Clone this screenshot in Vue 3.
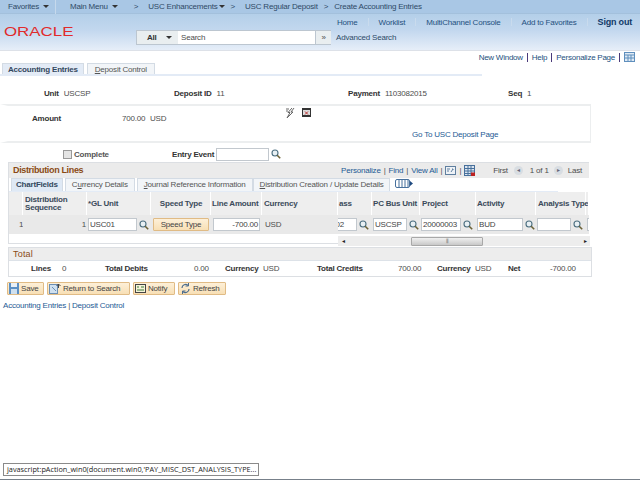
<template>
  <div class="page">
    <svg class="defs" width="0" height="0">
      <symbol id="glass" viewBox="0 0 10 10">
        <circle cx="4" cy="4" r="3" fill="#e8f0f4" stroke="#4c6f80" stroke-width="1.1" />
        <path d="M6.2 6.2 9.2 9.2" stroke="#6b6136" stroke-width="1.6" />
      </symbol>
    </svg>

    <header class="head">
      <nav class="crumbs">
        <span class="crumb fav">Favorites<i class="caret"></i></span>
        <span class="crumb menu">Main Menu<i class="caret"></i></span>
        <span class="sep first">&gt;</span>
        <span class="crumb enh">USC Enhancements<i class="caret tight"></i></span>
        <span class="sep">&gt;</span>
        <span class="crumb">USC Regular Deposit</span>
        <span class="sep last">&gt;</span>
        <span class="crumb">Create Accounting Entries</span>
      </nav>
      <div class="toplinks">
        <a>Home</a><b></b><a>Worklist</a><b></b><a>MultiChannel Console</a><b></b><a>Add to Favorites</a><b></b><a class="signout">Sign out</a>
      </div>
      <div class="brandrow">
        <span class="logo">ORACLE</span>
        <div class="search">
          <span class="all">All<i class="caret"></i></span>
          <span class="box">Search</span>
          <span class="go">»</span>
        </div>
        <span class="adv">Advanced Search</span>
      </div>
    </header>

    <div class="pagelinks">
      <a>New Window</a><em></em><a>Help</a><em></em><a>Personalize Page</a><em></em>
      <svg width="11" height="10" viewBox="0 0 11 10"><rect x="0.5" y="0.5" width="10" height="9" fill="#dfeaf4" stroke="#5f8fbd" /><path d="M1 3h9M4 3v6M7 3v6M1 6h9" stroke="#5f8fbd" /></svg>
    </div>

    <div class="pagetabs">
      <span class="ptab on">Accounting Entries</span>
      <span class="ptab"><u>D</u>eposit Control</span>
    </div>

    <div class="keys">
      <span class="k unit"><b>Unit</b>USCSP</span>
      <span class="k dep"><b>Deposit ID</b>11</span>
      <span class="k pay"><b>Payment</b>1103082015</span>
      <span class="k seq"><b>Seq</b>1</span>
    </div>

    <section class="amount">
      <b class="amt-label">Amount</b>
      <span class="amt-val">700.00</span>
      <span class="amt-cur">USD</span>
      <svg class="bolt" width="9" height="10" viewBox="0 0 9 10"><path d="M6 0 2 4.500h2L1 10l6-6H5l3-4M3 1H0M2 3H0" fill="none" stroke="#666" /></svg>
      <svg class="cal" width="9" height="9" viewBox="0 0 9 9"><rect width="9" height="9" fill="#333" /><rect x="1" y="2" width="7" height="5" fill="#ddd" /><path d="M3 3.500 6 6.500M6 3.500 3 6.500" stroke="#b33" /></svg>
      <a class="goto">Go To USC Deposit Page</a>
    </section>

    <div class="entry">
      <label class="complete"><i class="check"></i>Complete</label>
      <b class="ev">Entry Event</b>
      <span class="input ev-in"></span>
      <svg class="mag"><use href="#glass" /></svg>
    </div>

    <section class="dist">
      <div class="dist-title">
        <h3>Distribution Lines</h3>
        <div class="dist-links">
          <a>Personalize</a><s>|</s><a>Find</a><s>|</s><a>View All</a><s>|</s>
          <svg width="11" height="9" viewBox="0 0 11 9"><rect x="0.5" y="0.5" width="10" height="8" fill="#eef2f6" stroke="#5f7f9f" /><path d="M2 3h3M2 5h2M6 6l2-3M7 3h1v1" stroke="#5f7f9f" fill="none" /></svg>
          <s>|</s>
          <svg width="11" height="11" viewBox="0 0 11 11"><rect x="0.5" y="0.5" width="10" height="10" fill="#dbe4ef" stroke="#47709c" /><path d="M1 3.500h9M1 6h9M1 8.500h9M4 1v9M7 1v9" stroke="#47709c" /><rect x="7" y="7.500" width="4" height="3.500" fill="#b22" /></svg>
          <span class="pager">First</span>
          <i class="round prev">◂</i>
          <span>1 of 1</span>
          <i class="round next">▸</i>
          <span>Last</span>
        </div>
      </div>
      <div class="subtabs">
        <span class="stab on">ChartFields</span>
        <span class="stab">C<u>u</u>rrency Details</span>
        <span class="stab"><u>J</u>ournal Reference Information</span>
        <span class="stab creation"><u>D</u>istribution Creation / Update Details</span>
        <svg class="showall" width="18" height="10" viewBox="0 0 18 10"><rect x="0.5" y="0.5" width="14" height="8" rx="1.500" fill="#fff" stroke="#47709c" /><path d="M4 1v7M7 1v7M10 1v7M13 1v7" stroke="#47709c" /><path d="M15 2 18 4.500 15 7z" fill="#1f4a80" /></svg>
      </div>
      <div class="grid ghead">
        <span class="c"></span>
        <span class="c pad">Distribution<br />Sequence</span>
        <span class="c">*GL Unit</span>
        <span class="c ctr">Speed Type</span>
        <span class="c">Line Amount</span>
        <span class="c pad">Currency</span>
        <span class="c">ass</span>
        <span class="c">PC Bus Unit</span>
        <span class="c pad">Project</span>
        <span class="c">Activity</span>
        <span class="c pad">Analysis Type</span>
        <span class="c"></span>
      </div>
      <div class="grid grow">
        <span class="d idx">1</span>
        <span class="d seqno">1</span>
        <span class="d fld"><span class="input w45">USC01</span><svg class="mag"><use href="#glass" /></svg></span>
        <span class="d ctr"><span class="btn speed">Speed Type</span></span>
        <span class="d"><span class="input amt">-700.00</span></span>
        <span class="d cur">USD</span>
        <span class="d fld tail"><span class="input w28">0002</span><svg class="mag"><use href="#glass" /></svg></span>
        <span class="d fld"><span class="input w30">USCSP</span><svg class="mag"><use href="#glass" /></svg></span>
        <span class="d fld"><span class="input w36">20000003</span><svg class="mag"><use href="#glass" /></svg></span>
        <span class="d fld"><span class="input w42">BUD</span><svg class="mag"><use href="#glass" /></svg></span>
        <span class="d fld"><span class="input w30"></span><svg class="mag"><use href="#glass" /></svg></span>
        <span class="d fld"><span class="input w30"></span></span>
      </div>
      <div class="scroll">
        <span class="arrow">◂</span>
        <span class="thumb">⦀</span>
        <span class="arrow r">▸</span>
      </div>
    </section>

    <section class="total">
      <h3>Total</h3>
      <div class="total-row">
        <b class="t1">Lines</b><span>0</span>
        <b>Total Debits</b><span>0.00</span>
        <b>Currency</b><span>USD</span>
        <b>Total Credits</b><span>700.00</span>
        <b>Currency</b><span>USD</span>
        <b>Net</b><span>-700.00</span>
      </div>
    </section>

    <div class="actions">
      <span class="btn act save">
        <svg width="10" height="11" viewBox="0 0 10 11"><rect width="10" height="11" fill="#5b8fc4" /><rect x="2" y="0" width="6" height="4" fill="#e8eff6" /><rect x="2" y="6" width="6" height="5" fill="#cfe0ef" /></svg>Save
      </span>
      <span class="btn act ret">
        <svg width="12" height="11" viewBox="0 0 12 11"><rect x="0.500" y="1.500" width="8" height="9" fill="#cfe0ef" stroke="#6b8fb5" /><path d="M3 4 7 8" stroke="#6b8fb5" /><path d="M9.500 5V1M7.500 3l2-2 2 2" fill="none" stroke="#444" /></svg>Return to Search
      </span>
      <span class="btn act not">
        <svg width="11" height="9" viewBox="0 0 11 9"><rect x="0.500" y="0.500" width="10" height="8" fill="#f6f3d8" stroke="#444" /><path d="M2 3h2M6 3h3M2 6h7" stroke="#3a7a3a" /></svg>Notify
      </span>
      <span class="btn act ref">
        <svg width="11" height="11" viewBox="0 0 11 11"><path d="M2 5a3.500 3.500 0 0 1 6-2.500M9 6a3.500 3.500 0 0 1-6 2.500" fill="none" stroke="#4d6d8d" stroke-width="1.200" /><path d="M8.500 0v3h-3M2.500 11V8h3" fill="none" stroke="#4d6d8d" /></svg>Refresh
      </span>
    </div>

    <div class="footlinks"><a>Accounting Entries</a> | <a>Deposit Control</a></div>

    <div class="status">javascript:pAction_win0(document.win0,'PAY_MISC_DST_ANALYSIS_TYPE...</div>
    <div class="taskbar"></div>
  </div>
</template>

<script setup>
</script>

<style>
html,
body {
  margin: 0;
  background: #fff;
}
</style>

<style scoped>
.page {
  position: relative;
  width: 640px;
  height: 480px;
  overflow: hidden;
  background: #fff;
  color: #4d4d4d;
  font: 8px/11px "Liberation Sans", Arial, sans-serif;
  letter-spacing: -0.2px;
}
.defs {
  position: absolute;
}
a {
  color: #1d5a94;
}
b {
  color: #333;
}
.head {
  height: 51px;
  box-sizing: border-box;
  border-bottom: 1px solid #dde1e8;
  background: linear-gradient(#b4cfe9 14px, #c2d7ee 30px, #e6eef8 50px);
}
.crumbs {
  display: flex;
  align-items: center;
  height: 14px;
  box-sizing: border-box;
  background: #a9c7e5;
  border-bottom: 1px solid #a3c0dc;
  color: #2f4a66;
}
.crumb.fav {
  width: 56px;
  height: 14px;
  padding-left: 8px;
  box-sizing: border-box;
  border-right: 1px solid #c6d9ec;
  line-height: 13px;
}
.crumb.menu {
  margin-left: 14px;
}
.sep {
  margin: 0 10px 0 6px;
}
.sep.first {
  margin: 0 10px 0 16px;
}
.sep.last {
  margin: 0 6px 0 6px;
}
.caret {
  display: inline-block;
  margin-left: 4px;
  vertical-align: 1px;
  border: 3px solid transparent;
  border-top-color: #333;
  border-bottom: 0;
}
.caret.tight {
  margin-left: 1px;
}
.toplinks {
  display: flex;
  justify-content: flex-end;
  align-items: center;
  height: 16px;
  padding-right: 8px;
  color: #1d4a7a;
}
.toplinks a {
  color: #24507e;
}
.toplinks b {
  width: 1px;
  height: 8px;
  margin: 0 10px;
  background: #c9dbed;
}
.toplinks .signout {
  color: #123a68;
  font-size: 9px;
  font-weight: bold;
}
.brandrow {
  display: flex;
  align-items: center;
  height: 15px;
}
.logo {
  width: 136px;
  box-sizing: border-box;
  padding-left: 3px;
  color: #e12b2b;
  font-size: 13px;
  letter-spacing: 0;
  transform: translateY(-6px) scaleX(1.3);
  transform-origin: left;
}
.search {
  display: flex;
  width: 195px;
  height: 15px;
  box-sizing: border-box;
  border: 1px solid #bcc6d0;
  background: #fff;
  line-height: 13px;
}
.all {
  width: 41px;
  padding-left: 10px;
  box-sizing: border-box;
  background: #e9eef0;
  color: #333;
  font-weight: bold;
}
.all .caret {
  margin-left: 9px;
}
.box {
  flex: 1;
  padding-left: 3px;
}
.go {
  width: 15px;
  margin-right: -1px;
  border-left: 1px solid #bcc6d0;
  background: #e9eef0;
  text-align: center;
}
.adv {
  margin-left: 5px;
  color: #2c4a68;
}
.pagelinks {
  display: flex;
  justify-content: flex-end;
  align-items: center;
  height: 12px;
  padding-right: 5px;
  letter-spacing: -0.25px;
}
.pagelinks a {
  color: #24507e;
}
.pagelinks em {
  width: 1px;
  height: 9px;
  margin: 0 4px;
  background: #4a3a7a;
}
.pagetabs {
  display: flex;
  gap: 3px;
  width: 482px;
  height: 13px;
  box-sizing: border-box;
  padding-left: 2px;
  border-bottom: 2px solid #e3ebf6;
}
.ptab {
  padding: 0 7px;
  border: 1px solid #d3dbe4;
  border-bottom: 0;
  background: #f2f5f8;
  color: #555;
  line-height: 11px;
}
.ptab.on {
  padding: 0 5px;
  background: #e3ebf6;
  color: #33485e;
  font-weight: bold;
}
.keys {
  display: grid;
  grid-template-columns: 174px 174px 160px 1fr;
  height: 12px;
  margin-top: 12px;
}
.k b {
  margin-right: 5px;
}
.unit {
  padding-left: 44px;
}
.amount {
  position: relative;
  width: 591px;
  height: 39px;
  margin-top: 4px;
  box-sizing: border-box;
  border: 2px solid #eceeef;
  border-right-width: 1px;
  border-left: 8px solid #fff;
}
.amount > * {
  position: absolute;
}
.amt-label {
  left: 24px;
  top: 7px;
}
.amt-val {
  left: 114px;
  top: 7px;
}
.amt-cur {
  left: 142px;
  top: 7px;
}
.bolt {
  left: 278px;
  top: 2px;
}
.cal {
  left: 294px;
  top: 2px;
}
.goto {
  left: 404px;
  top: 23px;
}
.entry {
  display: flex;
  align-items: center;
  height: 16px;
  margin-top: 3px;
}
.complete {
  display: flex;
  align-items: center;
  width: 109px;
  margin-left: 63px;
  color: #555;
  font-weight: bold;
}
.check {
  width: 7px;
  height: 7px;
  margin-right: 2px;
  border: 1px solid #999;
  background: #e4e4e4;
}
.ev {
  margin-right: 2px;
}
.input {
  display: inline-block;
  flex: none;
  height: 11px;
  padding: 0 1px;
  border: 1px solid #c2c8ce;
  background: #fff;
  color: #444;
  line-height: 11px;
  vertical-align: middle;
}
.ev-in {
  width: 49px;
}
.mag {
  flex: none;
  width: 10px;
  height: 10px;
  margin-left: 2px;
}
.dist {
  position: relative;
  width: 581px;
  height: 82px;
  margin-left: 8px;
  box-sizing: border-box;
  border-left: 1px solid #dcdfe3;
  border-bottom: 1px solid #dcdfe3;
}
.dist-title {
  display: flex;
  align-items: center;
  justify-content: space-between;
  height: 16px;
  box-sizing: border-box;
  padding: 0 7px 0 4px;
  border-top: 1px solid #dcdfe3;
  background: #ebebeb;
}
h3 {
  margin: 0;
  color: #8a4a14;
  font-size: 9px;
  font-weight: bold;
  letter-spacing: -0.35px;
}
.dist-links {
  display: flex;
  align-items: center;
  gap: 2px;
}
.dist-links s {
  margin: 0 1px;
  text-decoration: none;
}
.pager {
  margin-left: 16px;
}
.round {
  display: flex;
  align-items: center;
  justify-content: center;
  width: 9px;
  height: 9px;
  border-radius: 50%;
  background: #d8dde2;
  color: #667;
  font-size: 6px;
  font-style: normal;
}
.round.prev {
  margin: 0 5px 0 4px;
}
.round.next {
  margin: 0 3px;
}
.subtabs {
  display: flex;
  align-items: flex-end;
  gap: 2px;
  width: 549px;
  height: 14px;
  box-sizing: border-box;
  padding-left: 2px;
  border-bottom: 1px solid #e3ebf6;
}
.stab {
  height: 12px;
  padding: 0 6px;
  border: 1px solid #d3dbe4;
  border-bottom: 0;
  background: #f2f5f8;
  color: #555;
  line-height: 12px;
  white-space: nowrap;
}
.stab.on {
  padding: 0 4px;
  background: #dfe9f5;
  color: #33485e;
  font-weight: bold;
}
.stab.creation {
  margin-left: -2px;
  padding-right: 5px;
}
.showall {
  flex: none;
  margin: 0 0 2px 3px;
}
.grid {
  display: grid;
  grid-template-columns: 14px 64px 64px 60px 51px 76px 34px 48px 56px 60px 50px 1fr;
}
.ghead {
  height: 23px;
  background: #eeeeee;
  font-weight: bold;
  line-height: 8px;
}
.c {
  display: flex;
  align-items: center;
  box-sizing: border-box;
  padding-left: 1px;
  border-right: 1px solid #fff;
  color: #3a4a5a;
  white-space: nowrap;
}
.c.pad {
  padding-left: 2px;
}
.ctr {
  justify-content: center;
}
.grow {
  height: 19px;
  background: #e9e9e9;
}
.d {
  display: flex;
  align-items: center;
  min-width: 0;
  overflow: hidden;
  white-space: nowrap;
}
.idx {
  padding-left: 10px;
}
.seqno {
  justify-content: flex-end;
  padding-right: 1px;
}
.cur {
  padding-left: 3px;
}
.fld {
  padding-left: 1px;
}
.tail {
  justify-content: flex-end;
  padding-right: 3px;
}
.w45 {
  width: 45px;
}
.w28 {
  width: 28px;
}
.w30 {
  width: 30px;
}
.w36 {
  width: 36px;
}
.w42 {
  width: 42px;
}
.amt {
  width: 43px;
  margin-left: 2px;
  text-align: right;
}
.btn {
  display: inline-flex;
  align-items: center;
  justify-content: center;
  box-sizing: border-box;
  border: 1px solid #e0bb85;
  border-radius: 1px;
  background: linear-gradient(#fdf0d8, #f8dfb5);
  color: #444;
}
.speed {
  width: 56px;
  height: 13px;
}
.scroll {
  position: absolute;
  left: 329px;
  top: 74px;
  display: flex;
  align-items: center;
  width: 252px;
  height: 10px;
  background: #ededed;
  color: #222;
  font-size: 6px;
}
.arrow {
  width: 10px;
  margin-left: 4px;
}
.arrow.r {
  width: 6px;
  margin-left: auto;
}
.thumb {
  width: 72px;
  height: 9px;
  margin-left: 59px;
  box-sizing: border-box;
  border: 1px solid #a8a8a8;
  border-radius: 1px;
  background: linear-gradient(#f0f0f0, #c8c8c8);
  color: #777;
  line-height: 7px;
  text-align: center;
}
.total {
  width: 584px;
  height: 30px;
  margin: 3px 0 0 8px;
  box-sizing: border-box;
  border: 1px solid #dcdfe3;
}
.total h3 {
  height: 13px;
  box-sizing: border-box;
  padding-left: 4px;
  border-bottom: 1px solid #dde2e8;
  background: #ededed;
  font-weight: normal;
  letter-spacing: 0.2px;
  line-height: 12px;
}
.total-row {
  display: grid;
  grid-template-columns: 53px 43px 89px 31px 38px 54px 81px 39px 38px 33px 42px 1fr;
  align-items: center;
  height: 15px;
}
.total-row > * {
  white-space: nowrap;
}
.t1 {
  padding-left: 22px;
}
.actions {
  display: flex;
  gap: 3px;
  height: 13px;
  margin: 5px 0 0 7px;
}
.act {
  justify-content: flex-start;
  gap: 2px;
  height: 13px;
  padding-left: 1px;
}
.save {
  width: 37px;
}
.ret {
  width: 83px;
}
.not {
  width: 42px;
}
.ref {
  width: 48px;
}
.footlinks {
  margin: 5px 0 0 3px;
}
.status {
  position: absolute;
  left: 3px;
  bottom: 4px;
  width: 256px;
  height: 13px;
  box-sizing: border-box;
  padding-left: 3px;
  border: 1px solid #8a8a8a;
  background: #fff;
  color: #222;
  font: 7.300px/11px "Open Sans", sans-serif;
  letter-spacing: 0;
  white-space: nowrap;
}
.taskbar {
  position: absolute;
  left: 0;
  right: 0;
  bottom: 0;
  height: 1px;
  background: #77808a;
}
</style>
